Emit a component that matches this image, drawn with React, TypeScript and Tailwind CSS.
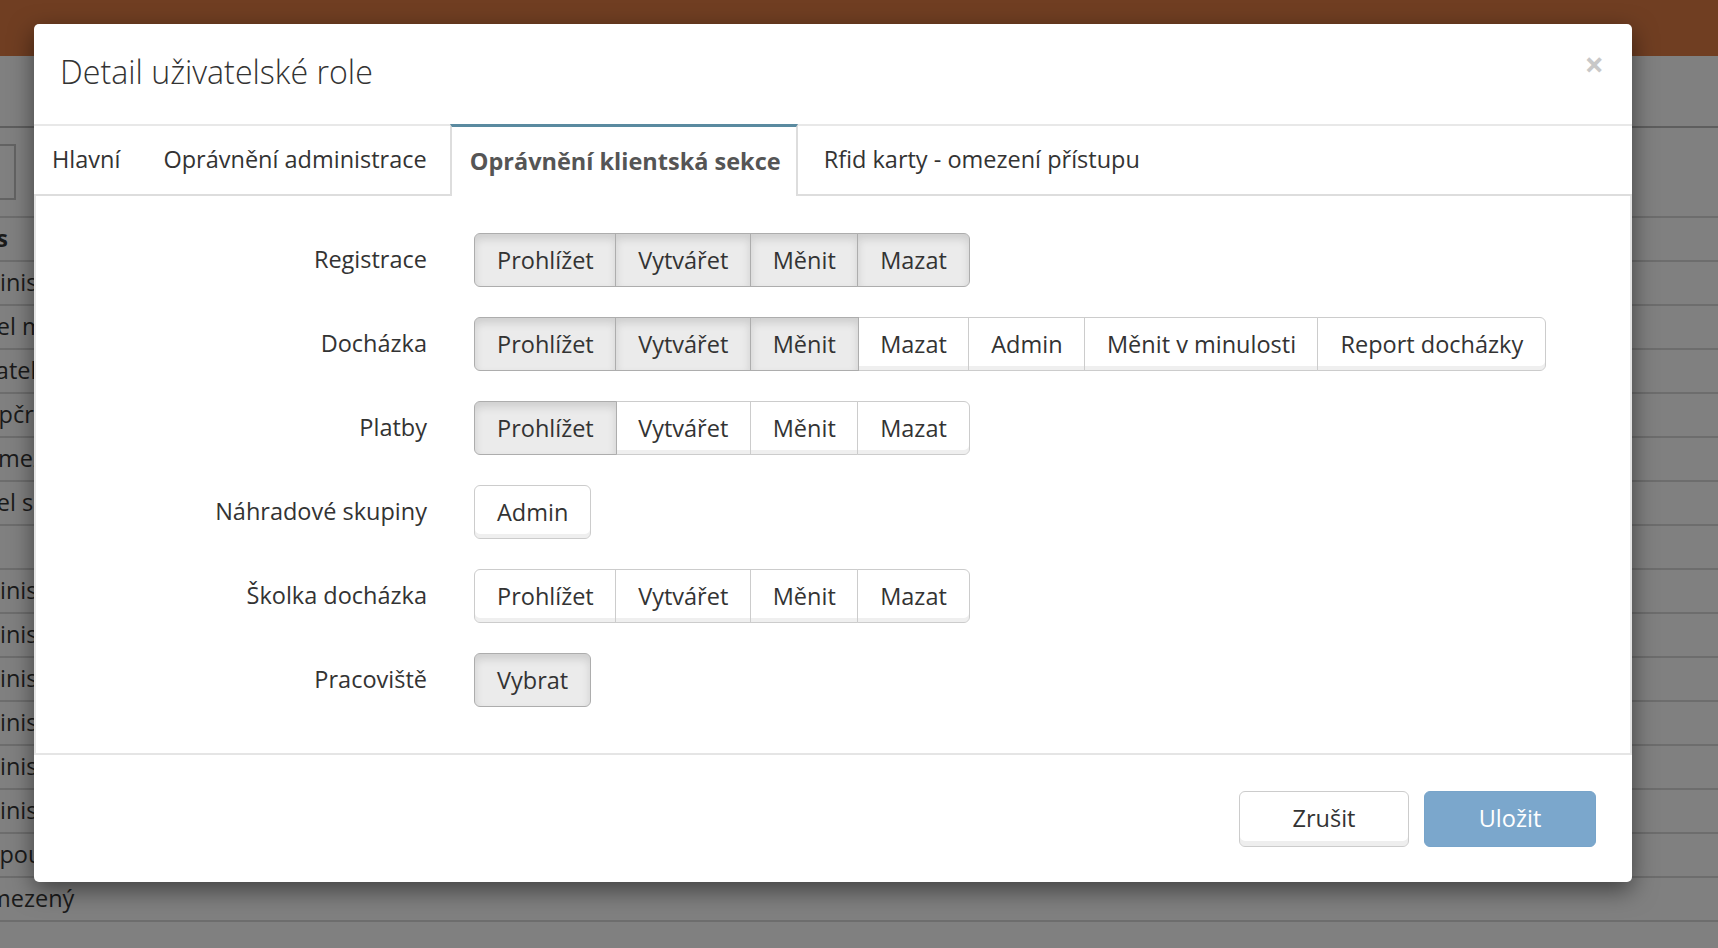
import React from 'react'

const permissionRows = [
  {
    label: 'Registrace',
    options: [
      { name: 'Prohlížet', on: true },
      { name: 'Vytvářet', on: true },
      { name: 'Měnit', on: true },
      { name: 'Mazat', on: true },
    ],
  },
  {
    label: 'Docházka',
    options: [
      { name: 'Prohlížet', on: true },
      { name: 'Vytvářet', on: true },
      { name: 'Měnit', on: true },
      { name: 'Mazat', on: false },
      { name: 'Admin', on: false },
      { name: 'Měnit v minulosti', on: false },
      { name: 'Report docházky', on: false },
    ],
  },
  {
    label: 'Platby',
    options: [
      { name: 'Prohlížet', on: true },
      { name: 'Vytvářet', on: false },
      { name: 'Měnit', on: false },
      { name: 'Mazat', on: false },
    ],
  },
  {
    label: 'Náhradové skupiny',
    options: [{ name: 'Admin', on: false }],
  },
  {
    label: 'Školka docházka',
    options: [
      { name: 'Prohlížet', on: false },
      { name: 'Vytvářet', on: false },
      { name: 'Měnit', on: false },
      { name: 'Mazat', on: false },
    ],
  },
  {
    label: 'Pracoviště',
    options: [{ name: 'Vybrat', on: true }],
  },
]

const tabs = [
  { name: 'Hlavní', cls: 'pl-[16px] pr-[18px] mr-[3px] border-transparent text-[#333]' },
  { name: 'Oprávnění administrace', cls: 'px-[18px] mr-[3px] border-transparent text-[#333]' },
  {
    name: 'Oprávnění klientská sekce',
    cls: 'pl-[18px] pr-[15px] mr-[6px] border-[#dddddd] border-t-[3px] border-t-[#5a8aa0] bg-white -mb-[2px] -mt-[2px] font-bold text-[#555]',
  },
  { name: 'Rfid karty - omezení přístupu', cls: 'px-[18px] mr-[3px] border-transparent text-[#333]' },
]

// rows of the page table behind the overlay (only the edges are visible)
const bgRows = [
  { text: 'Popis', indent: 'ml-[-55px]', bold: true },
  { text: 'Administrátor', indent: 'ml-[-51px]' },
  { text: 'Učitel matematiky', indent: 'ml-[-46px]' },
  { text: 'Uživatel', indent: 'ml-[-50px]' },
  { text: 'Kopčrová', indent: 'ml-[-30px]' },
  { text: 'Neomezený', indent: 'ml-[-47px]' },
  { text: 'Učitel sportu', indent: 'ml-[-46px]' },
  { text: '', indent: '' },
  { text: 'Administrátor', indent: 'ml-[-51px]' },
  { text: 'Administrátor', indent: 'ml-[-51px]' },
  { text: 'Administrátor', indent: 'ml-[-51px]' },
  { text: 'Administrátor', indent: 'ml-[-51px]' },
  { text: 'Administrátor', indent: 'ml-[-51px]' },
  { text: 'Administrátor', indent: 'ml-[-51px]' },
  { text: 'Uživatel pouze čtení', indent: 'ml-[-93px]' },
  { text: 'Neomezený', indent: 'ml-[-56px]' },
]

function PermissionGroup({ options }: { options: { name: string; on: boolean }[] }) {
  return (
    <div className="flex">
      {options.map((opt, i) => {
        const first = i === 0
        const last = i === options.length - 1
        return (
          <button
            key={opt.name}
            className={`relative h-[54px] px-[22px] border-[1.6px] text-[23.5px] leading-[32px] text-[#333] whitespace-nowrap ${
              first ? 'rounded-l-[6px]' : '-ml-[1.6px]'
            } ${last ? 'rounded-r-[6px]' : ''} ${
              opt.on
                ? 'z-10 bg-[#ebebeb] border-[#adadad] shadow-[inset_0_5px_8px_rgba(0,0,0,0.125)]'
                : 'bg-white border-[#cccccc] shadow-[inset_0_-4px_0_#efefef]'
            }`}
          >
            {opt.name}
          </button>
        )
      })}
    </div>
  )
}

export default function App() {
  return (
    <div className="relative w-full h-[948px] overflow-hidden bg-[#808080] font-['Open_Sans',sans-serif]">
      {/* Page behind the backdrop */}
      <div className="h-[56px] bg-[#703e22]" />
      <div className="h-[72px] border-b-2 border-[#5e5e5e]" />
      <div className="h-[88px] flex items-center">
        <div className="w-[16px] h-[56px] border-2 border-l-0 border-[#636363]" />
      </div>
      <div className="border-t-2 border-[#6d6d6d]">
        {bgRows.map((row, i) => (
          <div
            key={i}
            className="h-[44px] border-b-2 border-[#6d6d6d] flex items-center overflow-hidden"
          >
            <span
              className={`${row.indent} whitespace-nowrap text-[23.5px] text-[#1a1a1a] ${
                row.bold ? 'font-bold' : ''
              }`}
            >
              {row.text}
            </span>
          </div>
        ))}
      </div>

      {/* Modal */}
      <div className="absolute inset-0">
        <div className="ml-[34px] mt-[24px] w-[1598px] bg-white rounded-[5px] shadow-[0_8px_24px_rgba(0,0,0,0.5)]">
          {/* Header */}
          <div className="h-[102px] flex justify-between border-b-2 border-[#e8e8e8] pl-[26px] pr-[28px]">
            <h4 className="self-center mb-[4px] text-[32.2px] font-light text-[#333] leading-[44px]">
              Detail uživatelské role
            </h4>
            <button className="self-start mt-[23px] text-[34px] leading-none font-bold text-[#c8c8c8]">
              ×
            </button>
          </div>

          {/* Tabs */}
          <div className="h-[70px] flex border-b-2 border-[#dddddd]">
            {tabs.map((tab) => (
              <div
                key={tab.name}
                className={`flex items-center text-[23.5px] whitespace-nowrap border-x-2 ${tab.cls}`}
              >
                {tab.name}
              </div>
            ))}
          </div>

          {/* Body */}
          <div className="border-x-2 border-b-2 border-[#e5e5e5] pt-[37px] pb-[46px] flex flex-col gap-[30px]">
            {permissionRows.map((row) => (
              <div key={row.label} className="flex items-center">
                <div className="w-[391px] text-right text-[23.5px] text-[#333]">{row.label}</div>
                <div className="ml-[47px]">
                  <PermissionGroup options={row.options} />
                </div>
              </div>
            ))}
          </div>

          {/* Footer */}
          <div className="h-[127px] flex items-center justify-end gap-[15px] pr-[36px]">
            <button className="w-[170px] h-[56px] rounded-[6px] border-[1.6px] border-[#cccccc] bg-white text-[23.5px] text-[#333] shadow-[inset_0_-5px_0_#eeeeee]">
              Zrušit
            </button>
            <button className="w-[172px] h-[56px] rounded-[6px] border-[1.6px] border-[#77a4ca] bg-[#7ba7cc] text-[23.5px] text-white">
              Uložit
            </button>
          </div>
        </div>
      </div>
    </div>
  )
}
